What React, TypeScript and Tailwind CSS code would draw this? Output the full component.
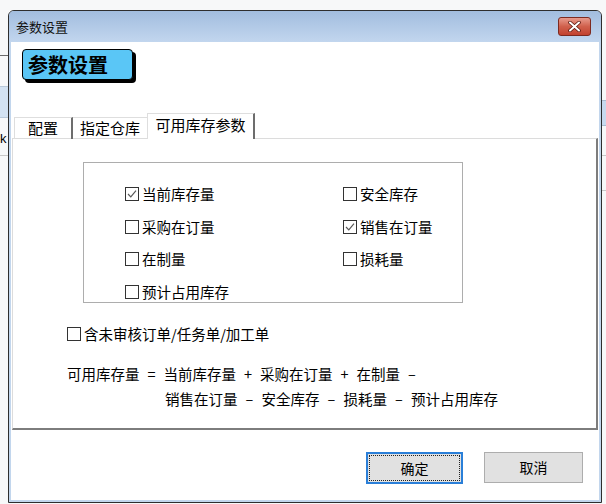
import React from "react";

const cjk = "font-['Noto_Sans_CJK_SC','Noto_Sans',sans-serif]";

function Box({ label, checked = false }: { label: string; checked?: boolean }) {
  return (
    <div className="flex items-center gap-[3px] h-[20px]">
      <span className="w-[14px] h-[14px] border border-[#333333] bg-white flex items-center justify-center shrink-0">
        {checked && (
          <svg width="12" height="12" viewBox="0 0 12 12">
            <path d="M2 6 L4.8 8.8 L10 2.6" stroke="#5a5a5a" strokeWidth="1.2" fill="none" />
          </svg>
        )}
      </span>
      <span className="leading-none">{label}</span>
    </div>
  );
}

function Sep({ c, w = "w-[24px]" }: { c: string; w?: string }) {
  return <span className={`${w} text-center`}>{c}</span>;
}

export default function App() {
  return (
    <div className={`relative w-[606px] h-[504px] bg-[#f7f8f9] overflow-hidden text-black ${cjk}`}>
      {/* stuff behind the window */}
      <div className="absolute left-0 top-[55px] w-[9px] h-px bg-[#6b6b6b]" />
      <div className="absolute left-0 top-[86px] w-[9px] h-[32px] bg-[#d3e2f2] border-y border-[#b9c9da]" />
      <div className="absolute left-0 top-[132px] text-[13px] leading-none font-['Liberation_Sans',sans-serif]">k</div>
      <div className="absolute left-0 top-[155px] w-[9px] h-px bg-[#c8c8c8]" />
      <div className="absolute right-0 top-[100px] w-[5px] h-[26px] bg-[#c7d9ee] border-y border-[#a9bbd0]" />
      <div className="absolute right-0 top-[155px] w-[5px] h-px bg-[#c8c8c8]" />
      <div className="absolute right-0 top-[190px] w-[5px] h-px bg-[#c8c8c8]" />

      {/* window */}
      <div className="absolute left-[8px] top-[10px] w-[594px] h-[493px] border border-[#2e2e2e] rounded-t-[6px] overflow-hidden flex flex-col bg-[#c2d6ed]">
        {/* title bar */}
        <div className="h-[31px] shrink-0 bg-gradient-to-b from-[#a2bddf] to-[#c2d6ee] flex items-center justify-between pl-[7px] pr-[10px]">
          <span className="text-[13px] text-[#111]">参数设置</span>
          <div className="w-[33px] h-[19px] rounded-[3px] border border-[#7d2a20] bg-gradient-to-b from-[#e79a8c] via-[#d0604c] to-[#c2412e] flex items-center justify-center">
            <svg width="13" height="11" viewBox="0 0 13 11">
              <path d="M2 1.5 L11 9.5 M11 1.5 L2 9.5" stroke="#5a1a12" strokeWidth="3.6" strokeLinecap="round" />
              <path d="M2 1.5 L11 9.5 M11 1.5 L2 9.5" stroke="#ffffff" strokeWidth="2" strokeLinecap="round" />
            </svg>
          </div>
        </div>

        {/* body */}
        <div className="flex-1 mx-[2px] mb-[2px] bg-white flex flex-col">
          {/* header badge */}
          <div className="ml-[11px] mt-[7px] w-[111px] h-[31px] bg-[#5ac6f6] border border-black rounded-[4px] shadow-[3px_3px_0_#000] flex items-center pl-[5px]">
            <span className="text-[20px] font-bold leading-none">参数设置</span>
          </div>

          {/* tabs */}
          <div className="mt-[33px] ml-[3px] flex items-end h-[26px] relative z-10 text-[15px]">
            <div className="w-[59px] h-[22px] border-l border-t border-[#dedede] border-r-[2px] border-r-[#6d6d6d] flex items-center justify-center">
              配置
            </div>
            <div className="w-[74px] h-[22px] border-t border-[#dedede] flex items-center justify-center">
              指定仓库
            </div>
            <div className="w-[108px] h-[26px] bg-white border-l border-t border-[#dedede] border-r-[2px] border-r-[#6d6d6d] flex items-center justify-center pb-[2px]">
              可用库存参数
            </div>
          </div>

          {/* panel */}
          <div className="-mt-px ml-px w-[586px] h-[292px] border-l border-t border-[#dcdcdc] border-r-[2px] border-b-[2px] border-r-[#7d7d7d] border-b-[#7d7d7d] text-[14.5px] flex flex-col">
            <div className="ml-[70px] mt-[23px] w-[380px] h-[141px] border border-[#adadad] pl-[41px] pt-[15px] grid grid-cols-[218px_1fr] auto-rows-[32.5px] items-center">
              <Box label="当前库存量" checked />
              <Box label="安全库存" />
              <Box label="采购在订量" />
              <Box label="销售在订量" checked />
              <Box label="在制量" />
              <Box label="损耗量" />
              <Box label="预计占用库存" />
            </div>

            <div className="ml-[54px] mt-[21px]">
              <Box label="含未审核订单/任务单/加工单" />
            </div>

            <div className="ml-[54px] mt-[17px] flex items-center h-[25px] whitespace-nowrap">
              <span>可用库存量</span>
              <Sep c="=" />
              <span>当前库存量</span>
              <Sep c="+" />
              <span>采购在订量</span>
              <Sep c="+" />
              <span>在制量</span>
              <Sep c="–" />
            </div>
            <div className="ml-[152px] flex items-center h-[25px] whitespace-nowrap">
              <span>销售在订量</span>
              <Sep c="–" />
              <span>安全库存</span>
              <Sep c="–" />
              <span>损耗量</span>
              <Sep c="–" />
              <span>预计占用库存</span>
            </div>
          </div>

          {/* buttons */}
          <div className="mt-[22px] flex justify-end gap-[21px] pr-[16px] text-[14px]">
            <button className="w-[97px] h-[32px] bg-[#e1e1e1] border-[2px] border-[#2a7fd8] p-px">
              <span className="w-full h-full border border-dotted border-[#222] flex items-center justify-center">确定</span>
            </button>
            <button className="w-[99px] h-[31px] bg-[#e1e1e1] border border-[#adadad] flex items-center justify-center">
              取消
            </button>
          </div>
        </div>
      </div>
    </div>
  );
}
